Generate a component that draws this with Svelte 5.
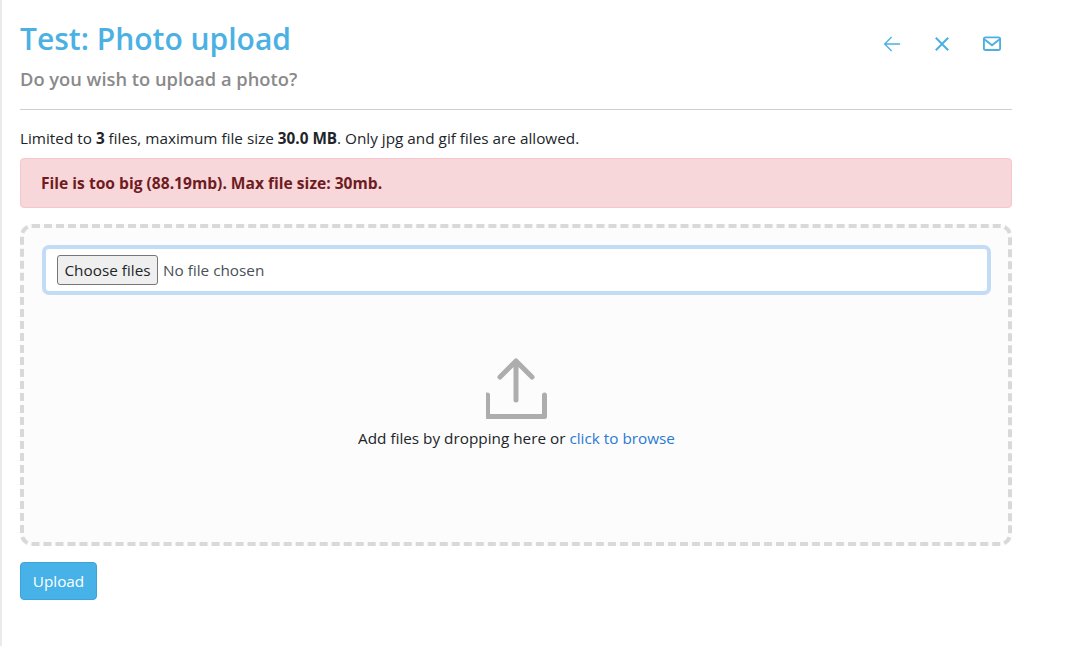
<script>
  const iconPaths = [
    { label: 'Back', d: 'M15.2 8H1.5M7.7 1.8 1.5 8l6.2 6.2', weight: 1.2 },
    { label: 'Close', d: 'M2.5 2.5l11 11M13.5 2.5l-11 11', weight: 1.8 }
  ];
</script>

<div class="shell">
  <main class="content">
    <header class="head">
      <div class="titles">
        <h1>Test: Photo upload</h1>
        <h2>Do you wish to upload a photo?</h2>
      </div>
      <nav class="actions">
        {#each iconPaths as icon}
          <button class="icon" aria-label={icon.label}>
            <svg width="18" height="18" viewBox="0 0 16 16" fill="none" stroke="currentColor" stroke-width={icon.weight}><path d={icon.d} /></svg>
          </button>
        {/each}
        <button class="icon" aria-label="Mail">
          <svg width="18" height="18" viewBox="0 0 18 18" fill="none" stroke="currentColor" stroke-width="1.9"><rect x="0.9" y="2.4" width="16.2" height="12.6" rx="1.6" /><path d="M1 4l8 6.3L17 4" /></svg>
        </button>
      </nav>
    </header>
    <hr />
    <p class="limits">Limited to <b>3</b> files, maximum file size <b>30.0 MB</b>. Only jpg and gif files are allowed.</p>
    <div class="alert">File is too big (88.19mb). Max file size: 30mb.</div>
    <section class="drop">
      <div class="file-box">
        <button class="choose">Choose files</button>
        <span class="chosen">No file chosen</span>
      </div>
      <div class="prompt">
        <svg width="62" height="62" viewBox="0 0 62 62" fill="none" stroke="#adadad" stroke-width="5" stroke-linecap="round" stroke-linejoin="round"><path d="M30 42V3M14 19 30 3l16 16" /><path d="M1.5 37v21.5h57V37" /></svg>
        <p>Add files by dropping here or <a href="#browse">click to browse</a></p>
      </div>
    </section>
    <button class="upload">Upload</button>
  </main>
</div>

<style>
  :global(body) {
    margin: 0;
    background: #fff;
  }
  .shell {
    box-sizing: border-box;
    height: 646px;
    border-left: 2px solid #eaeaea;
    padding: 0 68px 0 18px;
    font-family: "Open Sans", "Noto Sans", sans-serif;
    font-size: 15.3px;
    color: #212529;
    overflow: hidden;
  }
  .head {
    display: flex;
    justify-content: space-between;
    height: 109px;
  }
  h1 {
    margin: 18px 0 0;
    font-size: 30px;
    line-height: 42px;
    font-weight: 600;
    color: #4bb1e3;
  }
  h2 {
    margin: 7px 0 0;
    font-size: 18.3px;
    line-height: 24px;
    font-weight: 600;
    color: #8a8a8a;
  }
  .actions {
    display: flex;
    gap: 20px;
    padding: 25px 0 0;
    margin-right: 5px;
    align-items: flex-start;
  }
  .icon {
    width: 30px;
    height: 38px;
    padding: 0;
    border: 0;
    background: none;
    color: #4bb1e3;
    display: flex;
    align-items: center;
    justify-content: center;
  }
  hr {
    margin: 0;
    border: 0;
    border-top: 1px solid #cfcfcf;
  }
  .limits {
    margin: 18px 0 0;
    line-height: 20px;
  }
  .alert {
    margin-top: 10px;
    height: 50px;
    box-sizing: border-box;
    padding: 0 20px;
    display: flex;
    align-items: center;
    font-weight: 700;
    font-size: 15.6px;
    color: #6f1b22;
    background: #f8d7da;
    border: 1px solid #f5c6cb;
    border-radius: 4px;
  }
  .drop {
    margin-top: 16px;
    height: 322px;
    box-sizing: border-box;
    padding: 17px 17px 17px 18px;
    background: #fcfcfc;
    border: 4px dashed #d9d9d9;
    border-radius: 12px;
  }
  .file-box {
    box-sizing: border-box;
    height: 50px;
    display: flex;
    align-items: center;
    gap: 5px;
    padding: 0 11px;
    background: #fff;
    border: 4px solid #c3dcf5;
    border-radius: 7px;
    color: #495057;
  }
  .choose {
    font: inherit;
    color: #212529;
    width: 101px;
    height: 30px;
    padding: 0;
    background: #efefef;
    border: 1px solid #767676;
    border-radius: 3px;
  }
  .prompt {
    margin-top: 63px;
    display: flex;
    flex-direction: column;
    align-items: center;
  }
  .prompt p {
    margin: 8px 0 0;
    line-height: 20px;
  }
  .prompt a {
    color: #2a7ad3;
    text-decoration: none;
  }
  .upload {
    display: block;
    margin-top: 16px;
    width: 77px;
    height: 38px;
    padding: 0;
    font: inherit;
    color: #fff;
    background: #47b2e8;
    border: 1px solid #3ea3d8;
    border-radius: 4px;
  }
</style>
